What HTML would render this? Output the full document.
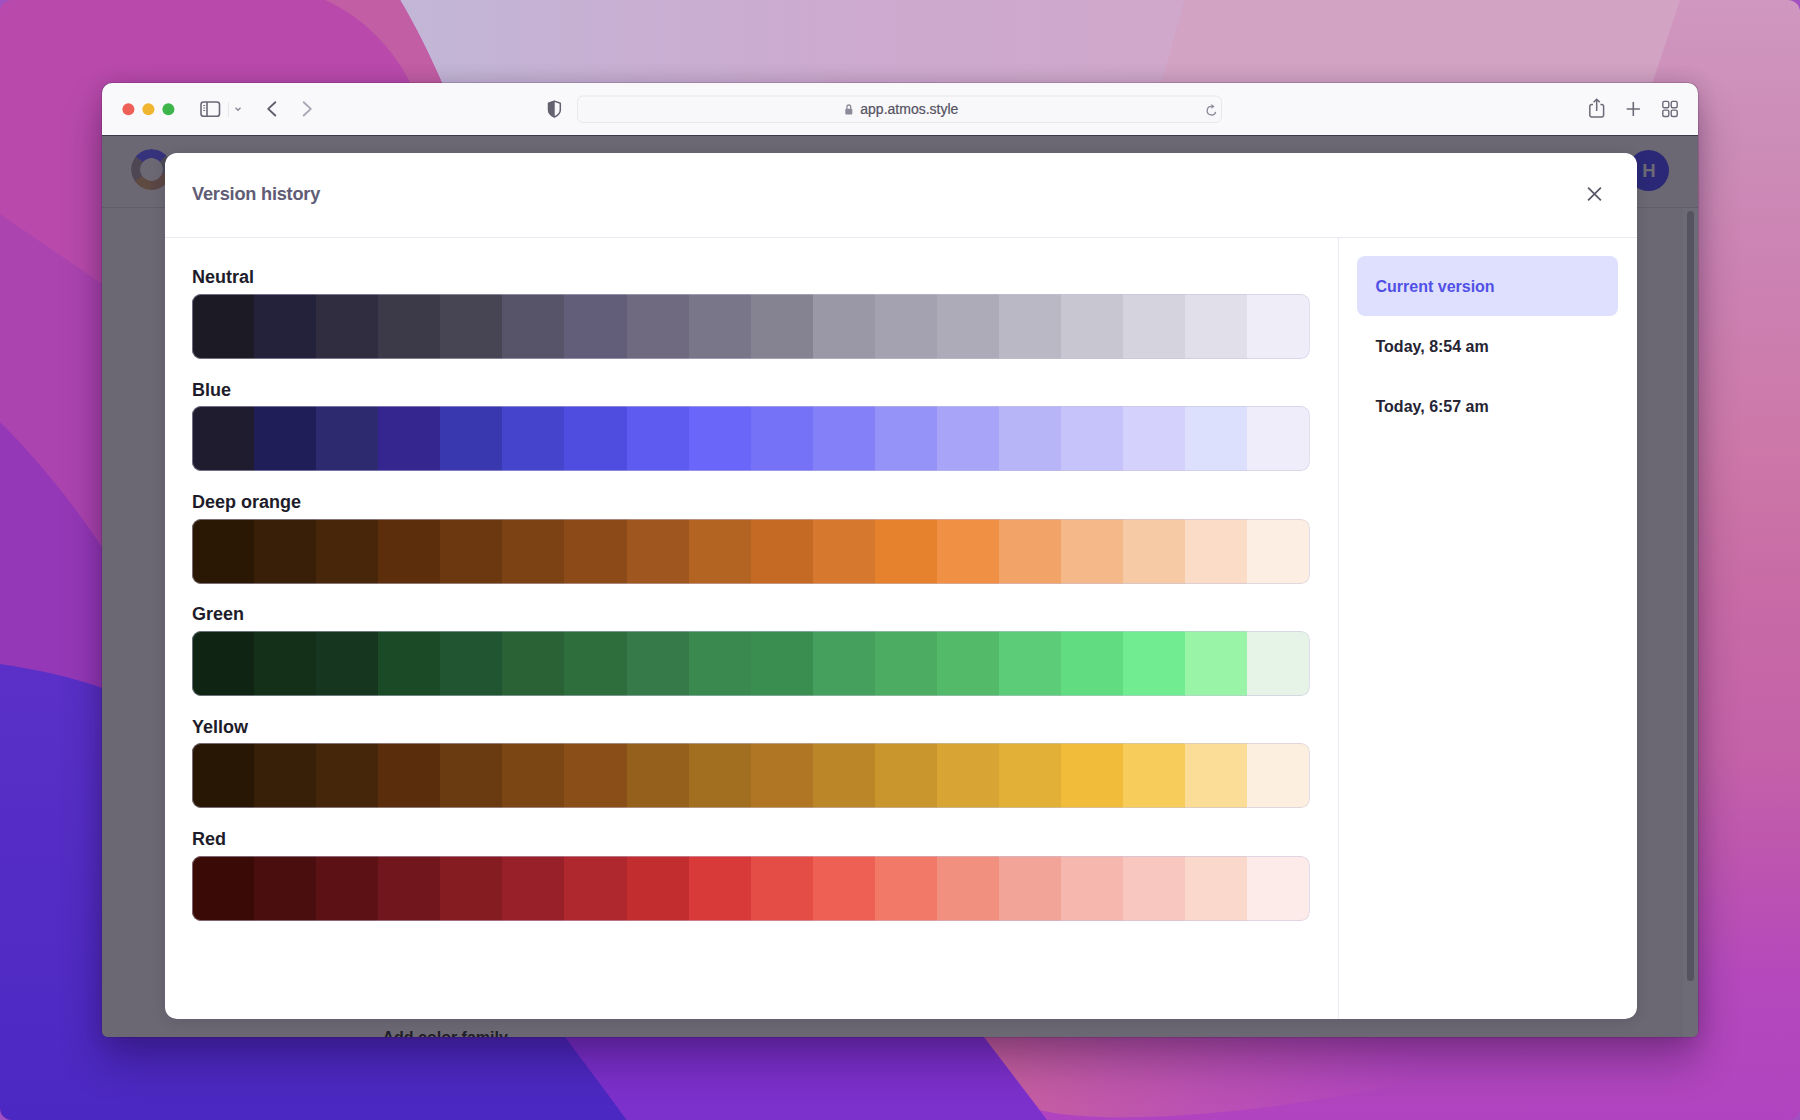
<!DOCTYPE html>
<html><head><meta charset="utf-8"><title>Version history</title>
<style>
html,body{margin:0;padding:0}
body{width:1800px;height:1120px;overflow:hidden;position:relative;background:#a050c0;font-family:"Liberation Sans",sans-serif}
#bg{position:absolute;left:0;top:0;width:1800px;height:1120px;border-radius:12px;overflow:hidden}
#bg svg{display:block}
#win{position:absolute;left:102px;top:82.5px;width:1596px;height:954px;background:#6b6873;border-radius:10px 10px 6px 6px;overflow:hidden;
 box-shadow:0 0 20px rgba(30,0,40,0.16),0 24px 40px rgba(20,0,40,0.32),0 0 0 0.5px rgba(60,30,70,0.35)}
.toolbar{position:absolute;left:0;top:0;width:1596px;height:52.5px;background:#f9f8fb;border-bottom:1px solid #3c3a4a}
.toolbar svg{position:absolute;left:0;top:0}
#content{position:absolute;left:0;top:53.5px;width:1596px;height:900.5px;background:#6b6873;overflow:hidden}
.page{position:absolute;left:0;top:0;width:1595px;height:900px}
.logo{position:absolute;left:28.8px;top:12.8px;width:41px;height:41px;border-radius:50%;
  background:conic-gradient(from -50deg,#36337c 0deg 95deg,#4a4856 95deg 160deg,#5a4644 160deg 230deg,#5e4a40 230deg 285deg,#4e4652 285deg 360deg);
  -webkit-mask:radial-gradient(circle at center,transparent 11px,#000 11.6px);mask:radial-gradient(circle at center,transparent 11px,#000 11.6px)}
.avatar{position:absolute;left:1526px;top:14px;width:41px;height:41px;border-radius:50%;background:#2b2977;color:#6b6a75;
  font-weight:bold;font-size:18.5px;line-height:41px;text-align:center;text-indent:1px}
.hline{position:absolute;left:0;top:71px;width:1596px;height:1px;background:#5e5d68}
.track{position:absolute;left:1580px;top:72px;width:16px;height:830px;background:#6c6b76;border-left:1px solid #686772}
.thumb{position:absolute;left:1584.5px;top:74.5px;width:7.5px;height:770px;border-radius:4px;background:#55535f}
.addfam{position:absolute;left:280.5px;top:892.5px;font-size:16px;font-weight:bold;color:#1f1d28;white-space:nowrap}
#modal{position:absolute;left:62.5px;top:16.8px;width:1472px;height:866.5px;background:#fff;border-radius:12px;overflow:hidden;box-shadow:0 2px 14px rgba(20,10,30,0.12)}
.mhead{position:absolute;left:0;top:0;width:1472px;height:84.5px;border-bottom:1px solid #e9e7ef}
.mtitle{position:absolute;left:27.5px;top:31.7px;font-size:18.2px;font-weight:bold;color:#615c75;white-space:nowrap;letter-spacing:-0.22px}
.close{position:absolute;left:1422px;top:33.5px}
.mbody{position:absolute;left:0;top:85.5px;width:1472px;height:781px}
.left{position:absolute;left:0;top:0;width:1173px;height:781px;border-right:1px solid #ebe9f1}
.right{position:absolute;left:1174px;top:0;width:298px;height:781px}
.fam{position:absolute;left:27.5px;width:1117.5px;height:100px}
.fam:nth-child(1){top:27px}.fam:nth-child(2){top:139.4px}.fam:nth-child(3){top:251.8px}
.fam:nth-child(4){top:364.2px}.fam:nth-child(5){top:476.6px}.fam:nth-child(6){top:589px}
.lbl{position:absolute;left:0;top:1px;font-size:18px;font-weight:bold;color:#1e1c2a;white-space:nowrap;line-height:22px}
.strip{position:absolute;left:0;top:28.5px;width:1117.5px;height:65px;border-radius:9px;overflow:hidden;display:flex}
.strip i{flex:1 1 0;display:block;height:100%}
.strip::after{content:"";position:absolute;inset:0;border-radius:9px;box-shadow:inset 0 0 0 1px rgba(196,192,220,0.5)}
.ver{position:absolute;left:18.5px;width:260.5px;height:60px;box-sizing:border-box;padding-left:18.5px;line-height:61px;
  font-size:16px;font-weight:bold;color:#262433;white-space:nowrap;border-radius:8px}
.ver:nth-child(1){top:17.6px}.ver:nth-child(2){top:77.6px}.ver:nth-child(3){top:137.6px}
.ver.cur{background:#dee0fd;color:#5150e6}

</style></head>
<body>
<div id="bg"><svg width="1800" height="1120" viewBox="0 0 1800 1120">
 <defs>
  <linearGradient id="gTop" x1="400" y1="0" x2="1180" y2="0" gradientUnits="userSpaceOnUse">
   <stop offset="0" stop-color="#c2b6d6"/><stop offset="0.55" stop-color="#cdaad0"/><stop offset="1" stop-color="#d0a8cc"/>
  </linearGradient>
  <linearGradient id="gRight" x1="0" y1="0" x2="0" y2="1120" gradientUnits="userSpaceOnUse">
   <stop offset="0" stop-color="#d097c0"/><stop offset="0.134" stop-color="#cc8cb8"/><stop offset="0.268" stop-color="#cc80b2"/><stop offset="0.4" stop-color="#cc78a8"/>
   <stop offset="0.535" stop-color="#c86aa6"/><stop offset="0.67" stop-color="#c462a8"/><stop offset="0.777" stop-color="#bc54b0"/><stop offset="0.875" stop-color="#b448bc"/><stop offset="1" stop-color="#b044c0"/>
  </linearGradient>
  <linearGradient id="gBlue" x1="0" y1="661" x2="0" y2="1120" gradientUnits="userSpaceOnUse">
   <stop offset="0" stop-color="#5a30c8"/><stop offset="1" stop-color="#4c28c2"/>
  </linearGradient>
  <radialGradient id="gGlow" cx="1070" cy="1075" r="130" gradientUnits="userSpaceOnUse" gradientTransform="translate(1070 1075) scale(1 0.35) translate(-1070 -1075)">
   <stop offset="0" stop-color="#c862a4" stop-opacity="0.9"/><stop offset="1" stop-color="#c862a4" stop-opacity="0"/>
  </radialGradient>
 </defs>
 <rect width="1800" height="1120" fill="#b94aac"/>
 <rect x="900" y="0" width="900" height="1120" fill="url(#gRight)"/>
 <!-- top lavender zones -->
 <path d="M400 0H1185L1160 90H445C430 55 415 25 400 0Z" fill="url(#gTop)"/>
 <path d="M1185 0H1680L1650 90H1160Z" fill="#d3a3c4"/>
 <path d="M325 0H400C415 25 430 55 445 90H414C395 50 365 18 325 0Z" fill="#c25ea4"/>
 <!-- left layered -->
 <path d="M0 214L102 284V1120H0Z" fill="#ac44b0"/>
 <path d="M0 422C40 462 70 500 102 547V1120H0Z" fill="#9538b8"/>
 <path d="M0 664C40 670 75 678 102 688L130 700V1000H540L627 1120H0Z" fill="url(#gBlue)"/>
 <!-- bottom purple -->
 <path d="M565 1037H984L1047 1120H627Z" fill="#7c30cc"/>
 <!-- glow -->
 <linearGradient id="gGl2" x1="990" y1="0" x2="1420" y2="0" gradientUnits="userSpaceOnUse">
  <stop offset="0" stop-color="#c8629c" stop-opacity="0.95"/><stop offset="0.35" stop-color="#c45ca6" stop-opacity="0.7"/><stop offset="1" stop-color="#c058b0" stop-opacity="0"/>
 </linearGradient>
 <path d="M984 1037L1040 1110C1080 1120 1160 1120 1260 1108C1320 1100 1380 1090 1420 1082V1037Z" fill="url(#gGl2)"/>
</svg>
</div>
<div id="win">
<div class="toolbar">
<svg width="1595" height="53" viewBox="0 0 1595 53">
  <circle cx="26.4" cy="26.2" r="6" fill="#ee5f57"/>
  <circle cx="46.4" cy="26.2" r="6" fill="#f0b630"/>
  <circle cx="66.4" cy="26.2" r="6" fill="#3db54a"/>
  <!-- sidebar icon -->
  <rect x="99" y="19" width="18.5" height="14.3" rx="2.6" fill="none" stroke="#6a6876" stroke-width="1.6"/>
  <line x1="105" y1="19" x2="105" y2="33.3" stroke="#6a6876" stroke-width="1.6"/>
  <line x1="101.3" y1="22.5" x2="103.2" y2="22.5" stroke="#6a6876" stroke-width="1"/>
  <line x1="101.3" y1="25" x2="103.2" y2="25" stroke="#6a6876" stroke-width="1"/>
  <line x1="101.3" y1="27.5" x2="103.2" y2="27.5" stroke="#6a6876" stroke-width="1"/>
  <line x1="126.5" y1="19" x2="126.5" y2="34" stroke="#e8e6ec" stroke-width="1"/>
  <path d="M133.5 24.8L136 27.3L138.5 24.8" fill="none" stroke="#8a8896" stroke-width="1.3"/>
  <!-- back / fwd -->
  <path d="M173.3 19.2L166.2 25.9L173.3 32.5" fill="none" stroke="#5f5d6b" stroke-width="1.9" stroke-linecap="round" stroke-linejoin="round"/>
  <path d="M201.7 19.2L208.8 25.9L201.7 32.5" fill="none" stroke="#a9a7b3" stroke-width="1.9" stroke-linecap="round" stroke-linejoin="round"/>
  <!-- shield -->
  <path d="M452.4 18.1L458.3 20.3V27C458.3 30.5 455.8 32.6 452.4 34C449 32.6 446.5 30.5 446.5 27V20.3Z" fill="none" stroke="#64626f" stroke-width="1.5" stroke-linejoin="round"/>
  <path d="M452.4 18.1L446.5 20.3V27C446.5 30.5 449 32.6 452.4 34Z" fill="#64626f" stroke="#64626f" stroke-width="0.6"/>
  <!-- url bar -->
  <rect x="475.5" y="13" width="644" height="26.5" rx="5.5" fill="#f8f7fa" stroke="#e9e7ec" stroke-width="1"/>
  <!-- lock -->
  <rect x="743.3" y="25.8" width="7" height="5.6" rx="1" fill="#8c8a98"/>
  <path d="M744.9 26V23.9A1.9 1.9 0 0 1 748.7 23.9V26" fill="none" stroke="#8c8a98" stroke-width="1.3"/>
  <text x="758.3" y="31" font-family="Liberation Sans" font-size="14" fill="#54525f" stroke="#54525f" stroke-width="0.2">app.atmos.style</text>
  <!-- reload -->
  <path d="M1113.65 28.8A4.3 4.3 0 1 1 1109.7 23.4" fill="none" stroke="#8d8b99" stroke-width="1.35"/>
  <path d="M1109.4 21.1L1112.6 23.4L1109.4 25.7Z" fill="#8d8b99"/>
  <!-- share -->
  <path d="M1491 21.6H1489.6A1.8 1.8 0 0 0 1487.8 23.4V32.1A1.8 1.8 0 0 0 1489.6 33.9H1499.8A1.8 1.8 0 0 0 1501.6 32.1V23.4A1.8 1.8 0 0 0 1499.8 21.6H1498.4" fill="none" stroke="#6c6a78" stroke-width="1.5"/>
  <path d="M1494.7 16.4V28M1491.6 19.3L1494.7 16.2L1497.8 19.3" fill="none" stroke="#6c6a78" stroke-width="1.5"/>
  <!-- plus -->
  <path d="M1531.3 19V33M1524.7 26H1537.9" fill="none" stroke="#6c6a78" stroke-width="1.6"/>
  <!-- grid -->
  <rect x="1560.8" y="18.4" width="6" height="6.4" rx="1.5" fill="none" stroke="#6c6a78" stroke-width="1.4"/>
  <rect x="1569.2" y="18.4" width="6" height="6.4" rx="1.5" fill="none" stroke="#6c6a78" stroke-width="1.4"/>
  <rect x="1560.8" y="27.1" width="6" height="6.4" rx="1.5" fill="none" stroke="#6c6a78" stroke-width="1.4"/>
  <rect x="1569.2" y="27.1" width="6" height="6.4" rx="1.5" fill="none" stroke="#6c6a78" stroke-width="1.4"/>
</svg>
</div>

<div id="content">
  <div class="page">
    <div class="logo"></div>
    <div class="avatar">H</div>
    <div class="hline"></div>
    <div class="track"></div><div class="thumb"></div>
    <div class="addfam">Add color family</div>
  </div>
  <div id="modal">
    <div class="mhead"><div class="mtitle">Version history</div>
      <svg class="close" width="16" height="16" viewBox="0.5 0 16 16"><path d="M1.6 1.6L14.4 14.4M14.4 1.6L1.6 14.4" stroke="#5d5a6c" stroke-width="1.8" stroke-linecap="butt" fill="none"/></svg>
    </div>
    <div class="mbody">
      <div class="left">
<div class="fam"><div class="lbl">Neutral</div><div class="strip"><i style="background:#1c1a25"></i><i style="background:#24213a"></i><i style="background:#312d40"></i><i style="background:#3c3949"></i><i style="background:#474453"></i><i style="background:#57546a"></i><i style="background:#625d78"></i><i style="background:#6f6a80"></i><i style="background:#79768a"></i><i style="background:#858291"></i><i style="background:#9a97a6"></i><i style="background:#a4a1b0"></i><i style="background:#adabb8"></i><i style="background:#bab8c4"></i><i style="background:#c8c6d1"></i><i style="background:#d5d3de"></i><i style="background:#e1dfea"></i><i style="background:#eeedf8"></i></div></div>
<div class="fam"><div class="lbl">Blue</div><div class="strip"><i style="background:#1f1c2f"></i><i style="background:#201e58"></i><i style="background:#2d2a70"></i><i style="background:#34268e"></i><i style="background:#3a38ae"></i><i style="background:#4444cc"></i><i style="background:#4f4de0"></i><i style="background:#5e5bf0"></i><i style="background:#6b66fa"></i><i style="background:#7672f8"></i><i style="background:#8380f8"></i><i style="background:#9592f8"></i><i style="background:#a8a4f8"></i><i style="background:#b8b4f8"></i><i style="background:#c6c2fa"></i><i style="background:#d4d2fc"></i><i style="background:#dde0fc"></i><i style="background:#efedfa"></i></div></div>
<div class="fam"><div class="lbl">Deep orange</div><div class="strip"><i style="background:#2a1805"></i><i style="background:#391f08"></i><i style="background:#48260a"></i><i style="background:#5c2e0c"></i><i style="background:#6c3810"></i><i style="background:#7d4214"></i><i style="background:#8c4a18"></i><i style="background:#a0561f"></i><i style="background:#b46422"></i><i style="background:#c46a24"></i><i style="background:#d6782e"></i><i style="background:#e6822e"></i><i style="background:#f09044"></i><i style="background:#f2a468"></i><i style="background:#f5b888"></i><i style="background:#f7caa6"></i><i style="background:#fbdcc6"></i><i style="background:#fceee2"></i></div></div>
<div class="fam"><div class="lbl">Green</div><div class="strip"><i style="background:#0f2412"></i><i style="background:#143018"></i><i style="background:#16361f"></i><i style="background:#1b4a26"></i><i style="background:#215430"></i><i style="background:#2a6236"></i><i style="background:#2e6e3c"></i><i style="background:#357a48"></i><i style="background:#3a8a50"></i><i style="background:#3a8e50"></i><i style="background:#45a05e"></i><i style="background:#4cac62"></i><i style="background:#52ba68"></i><i style="background:#5ccc78"></i><i style="background:#62dc80"></i><i style="background:#72ec90"></i><i style="background:#9af4a8"></i><i style="background:#e6f4e8"></i></div></div>
<div class="fam"><div class="lbl">Yellow</div><div class="strip"><i style="background:#281705"></i><i style="background:#371f08"></i><i style="background:#46260a"></i><i style="background:#5a2e0c"></i><i style="background:#6a3a10"></i><i style="background:#7c4514"></i><i style="background:#8a4e18"></i><i style="background:#94601c"></i><i style="background:#a26e20"></i><i style="background:#b07624"></i><i style="background:#ba8628"></i><i style="background:#c8962c"></i><i style="background:#d8a434"></i><i style="background:#e2b036"></i><i style="background:#f0bc3a"></i><i style="background:#f8cc5a"></i><i style="background:#fbdd98"></i><i style="background:#fcefe0"></i></div></div>
<div class="fam"><div class="lbl">Red</div><div class="strip"><i style="background:#3a0a06"></i><i style="background:#4a0e0e"></i><i style="background:#5c1214"></i><i style="background:#70161c"></i><i style="background:#841c22"></i><i style="background:#982028"></i><i style="background:#ae282e"></i><i style="background:#c22e30"></i><i style="background:#d83a3a"></i><i style="background:#e44c46"></i><i style="background:#ee6054"></i><i style="background:#f27868"></i><i style="background:#f29080"></i><i style="background:#f2a498"></i><i style="background:#f6b8ae"></i><i style="background:#f8c8c0"></i><i style="background:#fad8cc"></i><i style="background:#fcebe8"></i></div></div>
      </div>
      <div class="right">
        <div class="ver cur">Current version</div>
        <div class="ver">Today, 8:54 am</div>
        <div class="ver">Today, 6:57 am</div>
      </div>
    </div>
  </div>
</div>
</div>
</body></html>
